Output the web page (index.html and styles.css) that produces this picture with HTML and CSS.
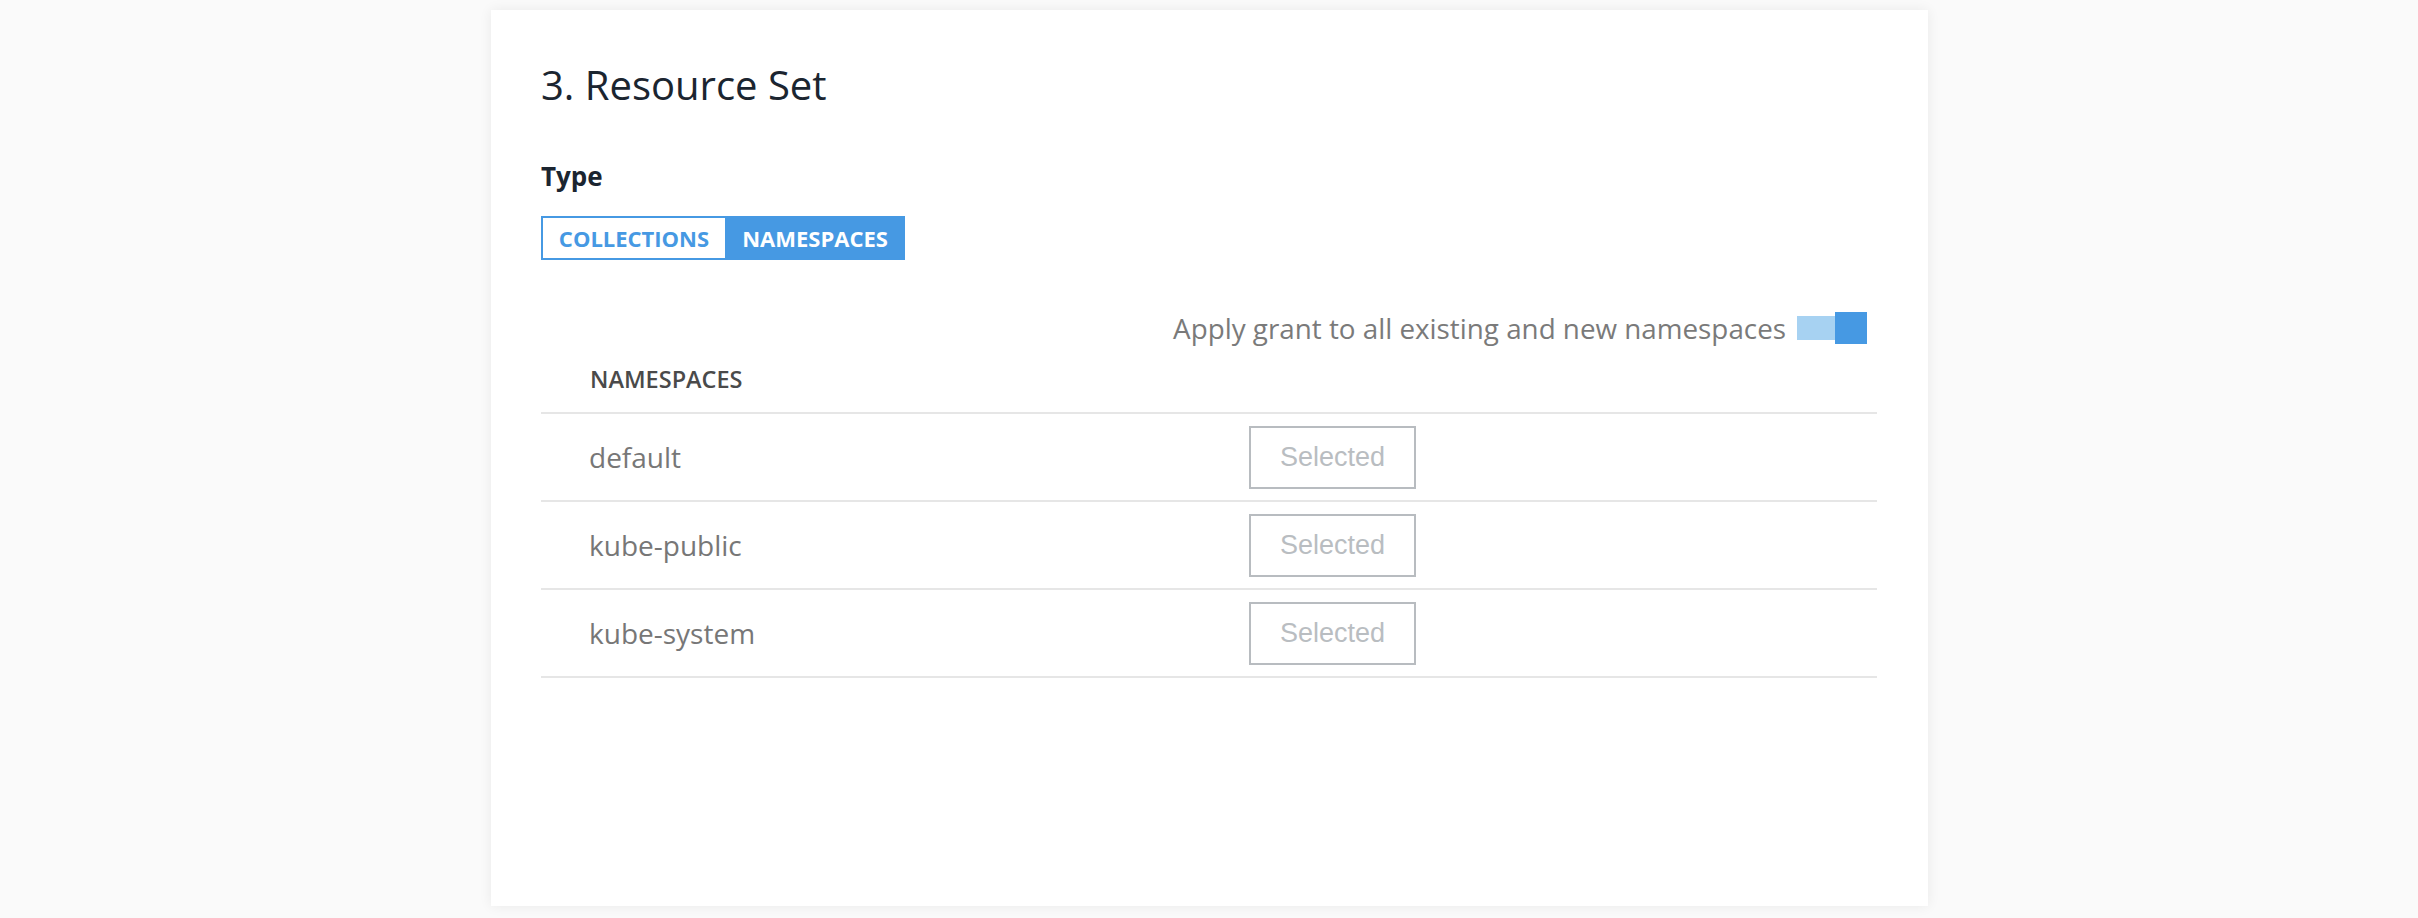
FILE: index.html
```html
<!DOCTYPE html>
<html lang="en">
<head>
<meta charset="utf-8">
<title>Resource Set</title>
<link rel="stylesheet" href="styles.css">
</head>
<body>
<main class="page">
  <section class="card">
    <h2 class="title">3. Resource Set</h2>
    <div class="label">Type</div>
    <div class="segmented">
      <button class="seg seg-off">COLLECTIONS</button>
      <button class="seg seg-on">NAMESPACES</button>
    </div>
    <div class="toggle-row">
      <span class="toggle-text">Apply grant to all existing and new namespaces</span>
      <span class="toggle"><span class="knob"></span></span>
    </div>
    <div class="table">
      <div class="thead">
        <div class="th">NAMESPACES</div>
        <div></div>
      </div>
      <div class="tr">
        <div class="td name">default</div>
        <div class="td"><span class="sel-btn">Selected</span></div>
      </div>
      <div class="tr">
        <div class="td name">kube-public</div>
        <div class="td"><span class="sel-btn">Selected</span></div>
      </div>
      <div class="tr">
        <div class="td name">kube-system</div>
        <div class="td"><span class="sel-btn">Selected</span></div>
      </div>
    </div>
  </section>
</main>
</body>
</html>
```

FILE: styles.css
```css
html, body {
  margin: 0;
  padding: 0;
  background: #fafafa;
  font-family: "Open Sans", "Noto Sans", sans-serif;
}

.page {
  display: flex;
  justify-content: flex-start;
  padding: 10px 0 12px 491px;
}

.card {
  box-sizing: border-box;
  width: 1437px;
  height: 896px;
  background: #ffffff;
  box-shadow: 0 0 12px rgba(0, 0, 0, 0.07);
  padding: 51px 51px 0 50px;
}

.title {
  margin: 0;
  font-size: 40px;
  line-height: 48px;
  font-weight: 400;
  color: #1b2530;
}

.label {
  margin-top: 49px;
  font-size: 26px;
  line-height: 36px;
  font-weight: 700;
  color: #1b2530;
}

.segmented {
  display: flex;
  margin-top: 22px;
}

.seg {
  box-sizing: border-box;
  height: 44px;
  margin: 0;
  border: 2px solid #4699e3;
  font-family: "Open Sans", "Noto Sans", sans-serif;
  font-size: 22px;
  font-weight: 700;
  line-height: 1;
  padding: 0;
  cursor: pointer;
}

.seg-off {
  width: 184px;
  background: #ffffff;
  color: #4699e3;
  border-right: 0;
}

.seg-on {
  width: 180px;
  background: #4699e3;
  color: #ffffff;
}

.toggle-row {
  display: flex;
  justify-content: flex-end;
  align-items: center;
  gap: 11px;
  margin-top: 52px;
  padding-right: 10px;
  height: 32px;
}

.toggle-text {
  font-size: 27.8px;
  line-height: 32px;
  color: #7a7a7a;
}

.toggle {
  position: relative;
  width: 70px;
  height: 24px;
  background: #a7d2f2;
}

.knob {
  position: absolute;
  right: 0;
  top: -4px;
  width: 32px;
  height: 32px;
  background: #4699e3;
}

.table {
  margin-top: 20px;
}

.thead,
.tr {
  display: grid;
  grid-template-columns: 708px 1fr;
  border-bottom: 2px solid #e6e6e6;
}

.th {
  padding-left: 49px;
  padding-bottom: 18px;
  font-size: 23.5px;
  line-height: 30px;
  font-weight: 600;
  color: #4a4a4a;
}

.tr {
  height: 86px;
  align-items: center;
}

.td.name {
  padding-left: 48px;
  font-size: 28px;
  line-height: 40px;
  color: #777777;
}

.sel-btn {
  box-sizing: border-box;
  display: inline-flex;
  align-items: center;
  justify-content: center;
  width: 167px;
  height: 63px;
  border: 2px solid #b8bcc0;
  font-family: "Liberation Sans", Arial, sans-serif;
  font-size: 27px;
  color: #b9bdc1;
}
```
